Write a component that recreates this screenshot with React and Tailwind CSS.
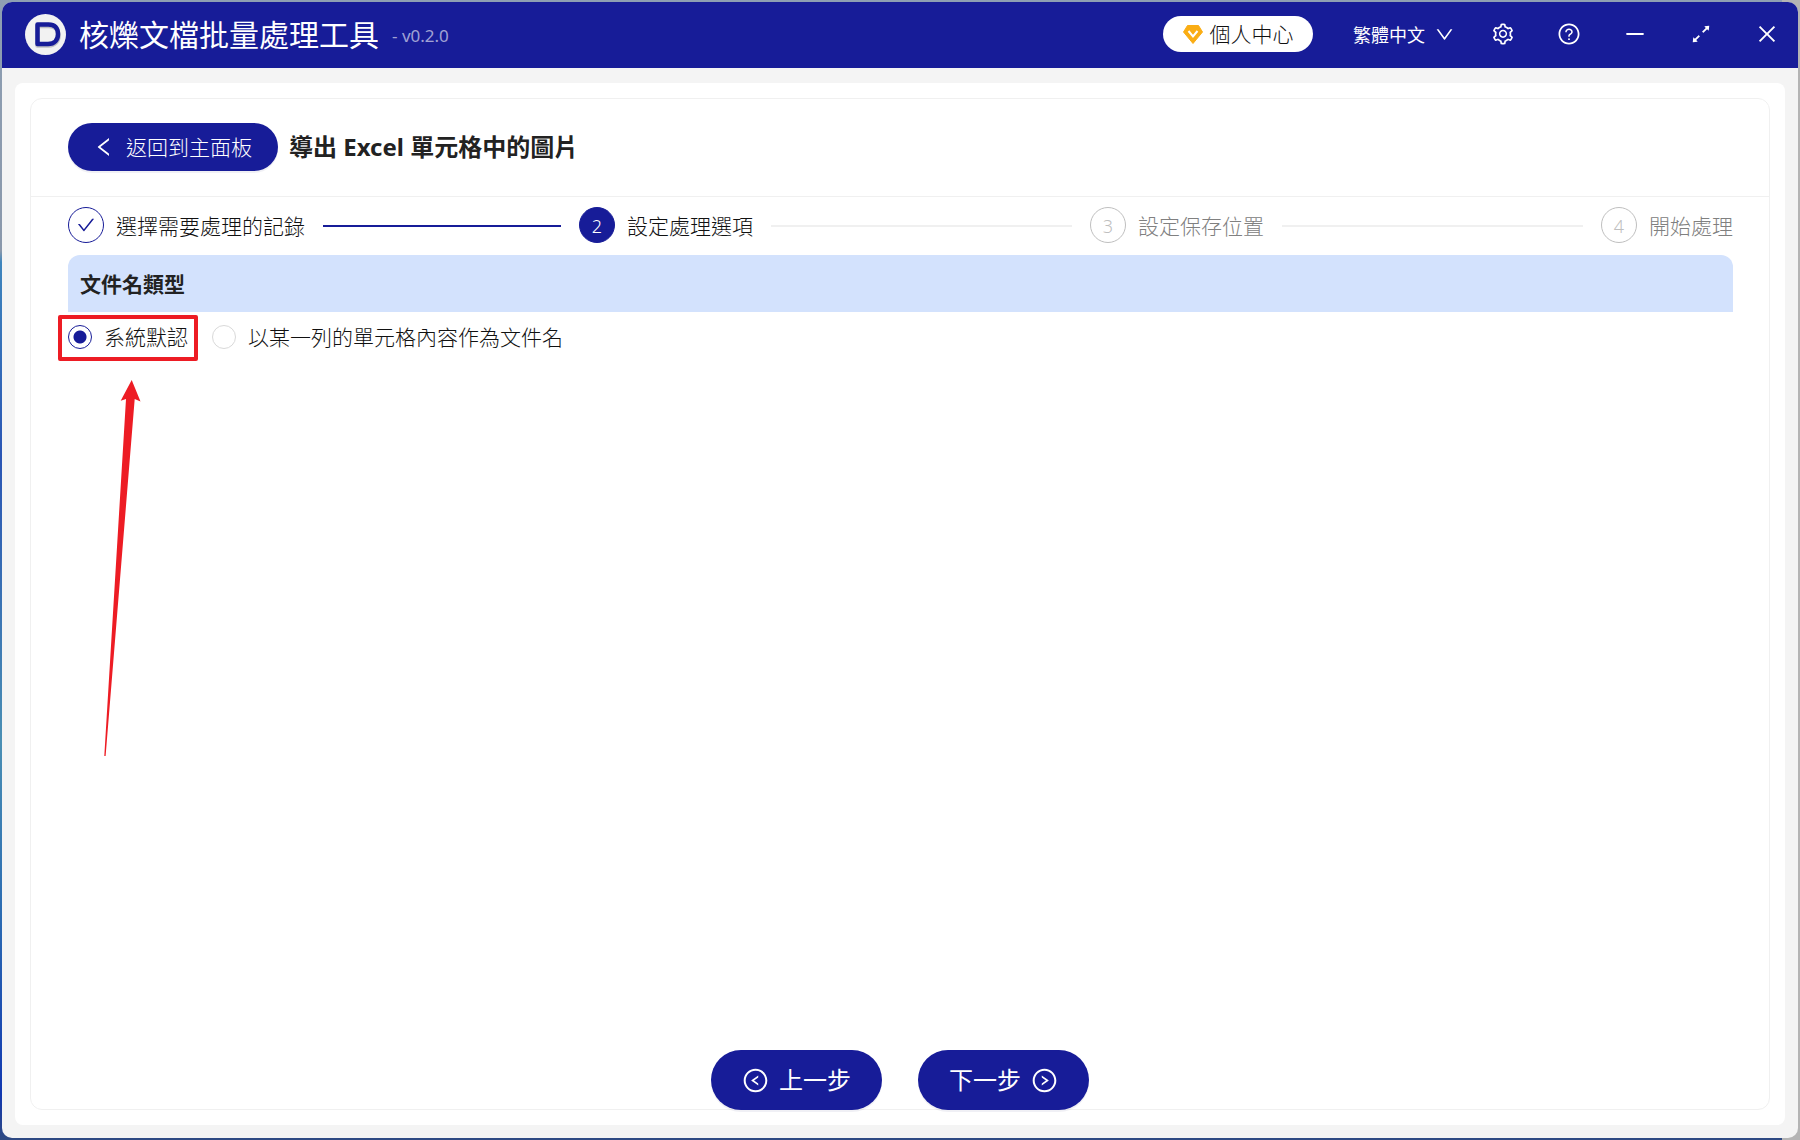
import React, { useState } from 'react';
import {
  AiOutlineArrowsAlt,
  AiOutlineCheck,
  AiOutlineClose,
  AiOutlineDown,
  AiOutlineLeft,
  AiOutlineLeftCircle,
  AiOutlineMinus,
  AiOutlineQuestionCircle,
  AiOutlineRightCircle,
  AiOutlineSetting,
} from 'react-icons/ai';

const steps = ['選擇需要處理的記錄', '設定處理選項', '設定保存位置', '開始處理'];
const currentStep = 1;

const nameTypes = [
  { value: 'default', label: '系統默認' },
  { value: 'column', label: '以某一列的單元格內容作為文件名' },
];

const Logo = () => (
  <svg viewBox="0 0 41 41" className="size-[41px]" aria-hidden="true">
    <circle cx="20.5" cy="20.5" r="20.5" fill="#f2f2f2" />
    <path
      d="M12.5 12h11.500c6.500 0 9.500 4 9.500 9.500s-3.400 10-10 10H12.500z"
      fill="none"
      stroke="#8a8a94"
      strokeWidth="4.500"
      strokeLinejoin="round"
      opacity=".5"
    />
    <path
      d="M12.5 10.500h11c6.500 0 9.500 3.800 9.500 9.500s-3.400 10-10 10H12.500z"
      fill="none"
      stroke="#171c98"
      strokeWidth="4.500"
      strokeLinejoin="round"
    />
  </svg>
);

const VipIcon = () => (
  <svg viewBox="0 0 20 19" className="h-[19px] w-5" aria-hidden="true">
    <path d="M4.500.5h11L19.500 7 10 18.500.500 7z" fill="#faad14" stroke="#faad14" strokeLinejoin="round" />
    <path d="M5.500 6l4.500 5.500L14.500 6" fill="none" stroke="#fff" strokeWidth="2" />
  </svg>
);

const TitleBar = () => (
  <header className="flex h-[66px] shrink-0 items-center bg-[#171c98] pr-[19px] pb-[2px] pl-[23px] text-white">
    <Logo />
    <h1 className="ml-[13px] pt-[2px] text-[30px] leading-9">核爍文檔批量處理工具</h1>
    <span className="ml-[13px] pt-1 text-[17px] text-white/60">- v0.2.0</span>

    <div className="ml-auto flex items-center">
      <button className="flex h-9 w-[150px] items-center justify-center gap-[7px] rounded-full bg-white text-[21px] font-light text-[#111]">
        <VipIcon />
        <span className="pt-[2px]">個人中心</span>
      </button>
      <button className="ml-10 flex items-center gap-[9px] text-lg">
        <span className="pt-[2px]">繁體中文</span>
        <AiOutlineDown className="size-[21px]" />
      </button>
      <div className="ml-9 flex items-center gap-[42px] text-2xl">
        <button aria-label="設定"><AiOutlineSetting /></button>
        <button aria-label="幫助"><AiOutlineQuestionCircle /></button>
        <button aria-label="最小化"><AiOutlineMinus /></button>
        <button aria-label="最大化"><AiOutlineArrowsAlt /></button>
        <button aria-label="關閉"><AiOutlineClose /></button>
      </div>
    </div>
  </header>
);

const Steps = () => (
  <ol className="flex gap-[18px]">
    {steps.map((label, i) => {
      const done = i < currentStep;
      const active = i === currentStep;
      const last = i === steps.length - 1;

      return (
        <li key={label} className={`flex items-center ${last ? 'flex-none' : 'flex-1'}`}>
          <span
            className={`flex size-9 shrink-0 items-center justify-center rounded-full border text-lg font-light ${
              active
                ? 'border-[#171c98] bg-[#171c98] text-white'
                : done
                  ? 'border-[#171c98] text-[#171c98]'
                  : 'border-[#bfbfbf] text-[#bfbfbf]'
            }`}
          >
            {done ? <AiOutlineCheck className="size-5" /> : <span className="pt-[2px]">{i + 1}</span>}
          </span>
          <span
            className={`ml-3 pt-[2px] text-[21px] leading-[34px] font-light whitespace-nowrap ${
              done || active ? 'text-[#111]' : 'text-[#808080]'
            }`}
          >
            {label}
          </span>
          {!last && <span className={`mt-[2px] ml-[18px] h-[2px] flex-1 ${done ? 'bg-[#171c98]' : 'bg-[#f0f0f0]'}`} />}
        </li>
      );
    })}
  </ol>
);

const NameTypeOptions = () => {
  const [nameType, setNameType] = useState('default');

  return (
    <section className="mt-3">
      <h3 className="flex h-[57px] items-center rounded-t-xl bg-[#d3e2fd] px-3 pt-[2px] text-[21px] font-bold text-[#222]">
        文件名類型
      </h3>
      <div className="flex gap-6 pt-[7px]">
        {nameTypes.map(({ value, label }) => (
          <label key={value} className="relative flex h-9 items-center gap-3 text-[21px] font-light text-[#111]">
            <input
              type="radio"
              name="nameType"
              value={value}
              checked={nameType === value}
              onChange={() => setNameType(value)}
              className="size-6 appearance-none rounded-full border border-[#d9d9d9] bg-white checked:border-[#171c98] checked:bg-[radial-gradient(circle,#171c98_6px,transparent_7px)]"
            />
            <span className="pt-[2px]">{label}</span>
            {value === 'default' && <Pointer />}
          </label>
        ))}
      </div>
    </section>
  );
};

// Red frame and arrow over the option to pick
const Pointer = () => (
  <span className="pointer-events-none absolute -inset-x-[10px] -top-1 h-[46px] rounded-xs border-4 border-[#ed1c24]">
    <svg viewBox="0 0 40 380" className="absolute top-[60px] left-10 h-[380px] w-10" aria-hidden="true">
      <path d="M29.700 1 18.700 21.700 24 20 2.300 377h1.300L32.700 20l5.800 2.500z" fill="#ed1c24" />
    </svg>
  </span>
);

const App = () => {
  return (
    <div className="flex min-h-screen bg-[linear-gradient(to_right,transparent_99%,#b4b4b4_99%),linear-gradient(#8e9fb3,#8a98ab_22%,#3f86bd_23%,#2a55b4_40%,#4a8fb4_65%,#2c6cb2_80%,#1238b0_96%,#2f4a82)] p-[2px] font-['Noto_Sans','Noto_Sans_CJK_TC',sans-serif]">
      <div className="flex flex-1 flex-col overflow-hidden rounded-[10px] bg-[#f4f4f4]">
        <TitleBar />

        <main className="mx-[13px] mt-[15px] mb-[13px] flex flex-1 flex-col rounded-lg bg-white p-[15px]">
          <div className="flex flex-1 flex-col rounded-xl border border-[#f0f0f0]">
            <div className="flex items-center gap-[11px] border-b border-[#f0f0f0] px-[37px] pt-6 pb-[25px]">
              <button className="flex h-12 w-[210px] items-center justify-center gap-[10px] rounded-full bg-[#171c98] pr-[2px] text-[21px] font-light text-white shadow-[0_2px_0_rgba(5,5,80,0.06)]">
                <AiOutlineLeft className="size-6" />
                <span className="pt-[2px]">返回到主面板</span>
              </button>
              <h2 className="text-2xl font-bold text-[#222]">導出 Excel 單元格中的圖片</h2>
            </div>

            <div className="flex flex-1 flex-col pt-[10px] pr-9 pl-[37px]">
              <Steps />
              <NameTypeOptions />

              <div className="mt-auto -mb-px flex justify-center gap-9 pr-px text-2xl text-white">
                <button className="flex h-[60px] w-[171px] items-center justify-center gap-[10px] rounded-full bg-[#171c98] shadow-[0_2px_0_rgba(5,5,80,0.06)]">
                  <AiOutlineLeftCircle className="size-[27px]" />
                  上一步
                </button>
                <button className="flex h-[60px] w-[171px] items-center justify-center gap-[10px] rounded-full bg-[#171c98] shadow-[0_2px_0_rgba(5,5,80,0.06)]">
                  下一步
                  <AiOutlineRightCircle className="size-[27px]" />
                </button>
              </div>
            </div>
          </div>
        </main>
      </div>
    </div>
  );
};

export default App;
